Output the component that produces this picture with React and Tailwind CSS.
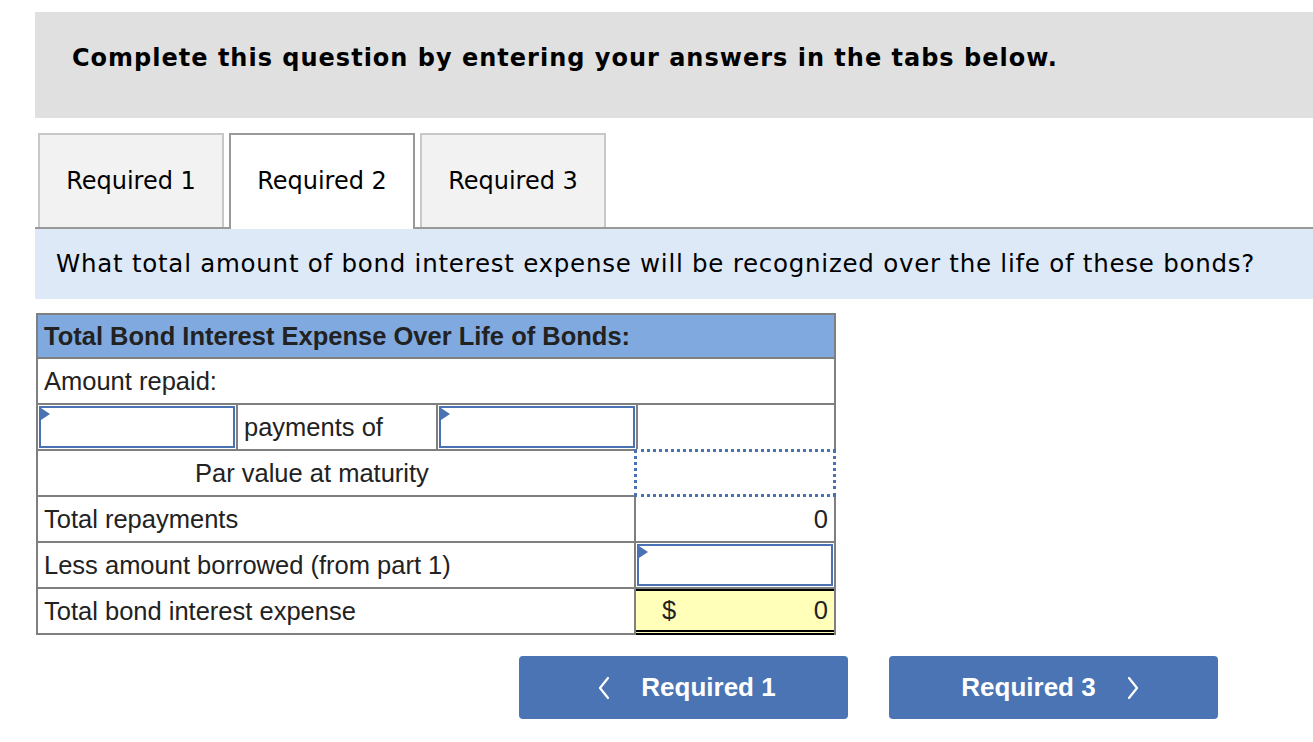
import React from 'react';

const verdana = { fontFamily: '"DejaVu Sans", Verdana, sans-serif' };
const arial = { fontFamily: '"Liberation Sans", Arial, sans-serif' };

function Flag() {
  return (
    <span className="absolute left-0 top-0 h-0 w-0 border-y-[6px] border-l-[9px] border-y-transparent border-l-[#4a72b3]" />
  );
}

function InputCell({ className = '' }) {
  return (
    <div className={`relative h-full p-[1px] ${className}`}>
      <div className="relative h-full w-full border-2 border-[#4a72b3] bg-white">
        <Flag />
      </div>
    </div>
  );
}

function Chevron({ dir }) {
  return (
    <svg width="14" height="24" viewBox="0 0 14 24" fill="none">
      <polyline
        points={dir === 'left' ? '11,2 3,12 11,22' : '3,2 11,12 3,22'}
        stroke="white"
        strokeWidth="2.2"
        strokeLinecap="round"
        strokeLinejoin="round"
      />
    </svg>
  );
}

export default function App() {
  const tabs = ['Required 1', 'Required 2', 'Required 3'];
  const active = 1;

  return (
    <div className="min-h-screen bg-white pl-[35px] pt-[12px] text-black">
      <div className="h-[106px] bg-[#e0e0e0] pl-[37px] pt-[28px]">
        <h2 className="text-[24px] font-bold tracking-[1px]" style={verdana}>
          Complete this question by entering your answers in the tabs below.
        </h2>
      </div>

      <div className="mt-[15px] flex border-b-2 border-[#999]">
        <div className="ml-[3px] flex gap-[5px]">
          {tabs.map((t, i) => (
            <div
              key={t}
              className={
                i === active
                  ? '-mb-[2px] flex h-[96px] w-[186px] items-center justify-center border-2 border-b-0 border-[#999] bg-white pb-[2px] text-[24px]'
                  : 'flex h-[94px] w-[186px] items-center justify-center border-2 border-b-0 border-[#c8c8c8] bg-[#f2f2f2] text-[24px]'
              }
              style={verdana}
            >
              {t}
            </div>
          ))}
        </div>
      </div>

      <div className="flex h-[70px] items-center bg-[#dde9f7] pl-[21px] text-[24.5px] tracking-[0.75px]" style={verdana}>
        What total amount of bond interest expense will be recognized over the life of these bonds?
      </div>

      <div className="ml-[1px] mt-[14px] w-[800px] border-x-2 border-t-2 border-[#7f7f7f] text-[25.5px] text-[#222]" style={arial}>
        <div className="flex h-[44px] items-center border-b-2 border-[#7f7f7f] bg-[#80aadf] pl-[6px] font-bold">
          Total Bond Interest Expense Over Life of Bonds:
        </div>

        <div className="flex h-[46px] items-center border-b-2 border-[#7f7f7f] pl-[6px]">Amount repaid:</div>

        <div className="flex h-[46px] border-b-2 border-[#7f7f7f]">
          <InputCell className="w-[198px]" />
          <div className="flex w-[202px] items-center border-x-2 border-[#7f7f7f] pl-[6px]">payments of</div>
          <InputCell className="w-[198px]" />
          <div className="w-[198px] border-l-2 border-[#7f7f7f]" />
        </div>

        <div className="flex h-[46px] border-b-2 border-[#7f7f7f]">
          <div className="flex w-[600px] items-center pl-[157px]">Par value at maturity</div>
          <div className="relative w-[196px]">
            <div className="absolute -bottom-[2px] -left-[4px] -right-[2px] -top-[2px] border-[3px] border-dotted border-[#4a72b3] bg-white" />
          </div>
        </div>

        <div className="flex h-[46px] border-b-2 border-[#7f7f7f]">
          <div className="flex w-[598px] items-center border-r-2 border-[#7f7f7f] pl-[6px]">Total repayments</div>
          <div className="flex w-[198px] items-center justify-end pr-[6px]">0</div>
        </div>

        <div className="flex h-[46px] border-b-2 border-[#7f7f7f]">
          <div className="flex w-[598px] items-center border-r-2 border-[#7f7f7f] pl-[6px]">Less amount borrowed (from part 1)</div>
          <InputCell className="w-[198px]" />
        </div>

        <div className="flex h-[46px]">
          <div className="flex w-[598px] items-center border-b-2 border-r-2 border-[#7f7f7f] pl-[6px]">Total bond interest expense</div>
          <div className="flex w-[198px] items-center justify-between border-b-[5px] border-t-2 border-double border-black bg-[#ffffb9] pl-[26px] pr-[6px]">
            <span>$</span>
            <span>0</span>
          </div>
        </div>
      </div>

      <div className="ml-[484px] mt-[21px] flex gap-[41px] text-[26px] font-bold text-white" style={arial}>
        <button className="flex h-[63px] w-[329px] items-center justify-center gap-[30px] rounded-[4px] bg-[#4a74b4] pl-[6px]">
          <Chevron dir="left" />
          <span>Required 1</span>
        </button>
        <button className="flex h-[63px] w-[329px] items-center justify-center gap-[30px] rounded-[4px] bg-[#4a74b4] pr-[6px]">
          <span>Required 3</span>
          <Chevron dir="right" />
        </button>
      </div>
    </div>
  );
}
